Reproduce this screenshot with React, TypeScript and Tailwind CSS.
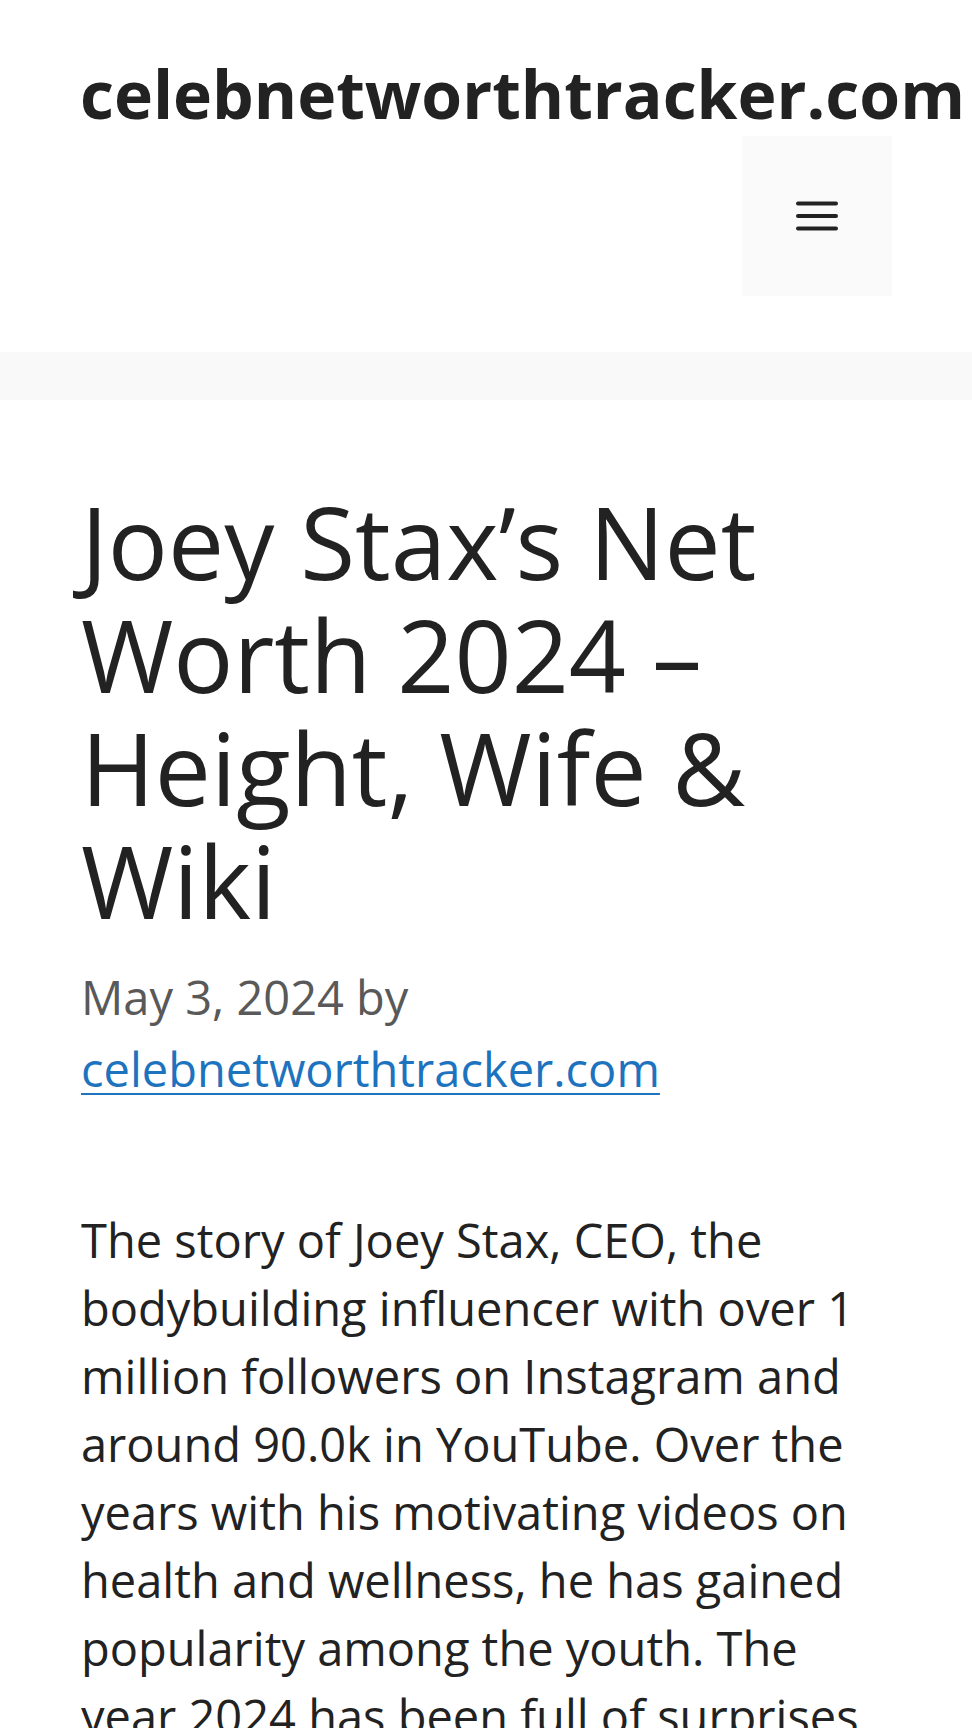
import React from 'react';

const MenuIcon: React.FC = () => (
  <svg width="42" height="30" viewBox="0 0 42 30" fill="none" aria-hidden="true">
    <line x1="2" y1="2.5" x2="40" y2="2.5" stroke="#222222" strokeWidth="4" strokeLinecap="round" />
    <line x1="2" y1="15" x2="40" y2="15" stroke="#222222" strokeWidth="4" strokeLinecap="round" />
    <line x1="2" y1="27.5" x2="40" y2="27.5" stroke="#222222" strokeWidth="4" strokeLinecap="round" />
  </svg>
);

const App: React.FC = () => {
  return (
    <div className="min-h-screen bg-[#f9f9f9] font-['Open_Sans',sans-serif] text-[#222222]">
      {/* site header */}
      <header className="bg-white px-[80px] pt-[54px] pb-[56px]">
        <div className="whitespace-nowrap text-[66px] font-bold leading-[79px]">
          <a href="#">celebnetworthtracker.com</a>
        </div>
        <div className="mt-[3px] flex justify-end">
          <button
            type="button"
            aria-label="Menu"
            className="flex h-[160px] w-[150px] items-center justify-center bg-[#fafafa]"
          >
            <MenuIcon />
          </button>
        </div>
      </header>

      <div className="h-[48px]" />

      {/* article */}
      <article className="bg-white px-[81px] pt-[85px] pb-[80px]">
        <header>
          <h1 className="text-[100px] font-normal leading-[113px]">
            Joey Stax’s Net Worth 2024 – Height, Wife &amp; Wiki
          </h1>
          <div className="mt-[24px] text-[47px] leading-[72px] text-[#595959]">
            <time dateTime="2024-05-03">May 3, 2024</time> by{' '}
            <a href="#" className="text-[#1e73be] underline decoration-[2px] underline-offset-[6px]">
              celebnetworthtracker.com
            </a>
          </div>
        </header>

        <div className="mt-[101px] text-[47px] leading-[68px]">
          <p>
            The story of Joey Stax, CEO, the bodybuilding influencer with over 1 million followers on
            Instagram and around 90.0k in YouTube. Over the years with his motivating videos on health
            and wellness, he has gained popularity among the youth. The year 2024 has been full of
            surprises for him, and his fans are keen to know more about his net worth, height, wife and
            personal life.
          </p>
        </div>
      </article>
    </div>
  );
};

export default App;
